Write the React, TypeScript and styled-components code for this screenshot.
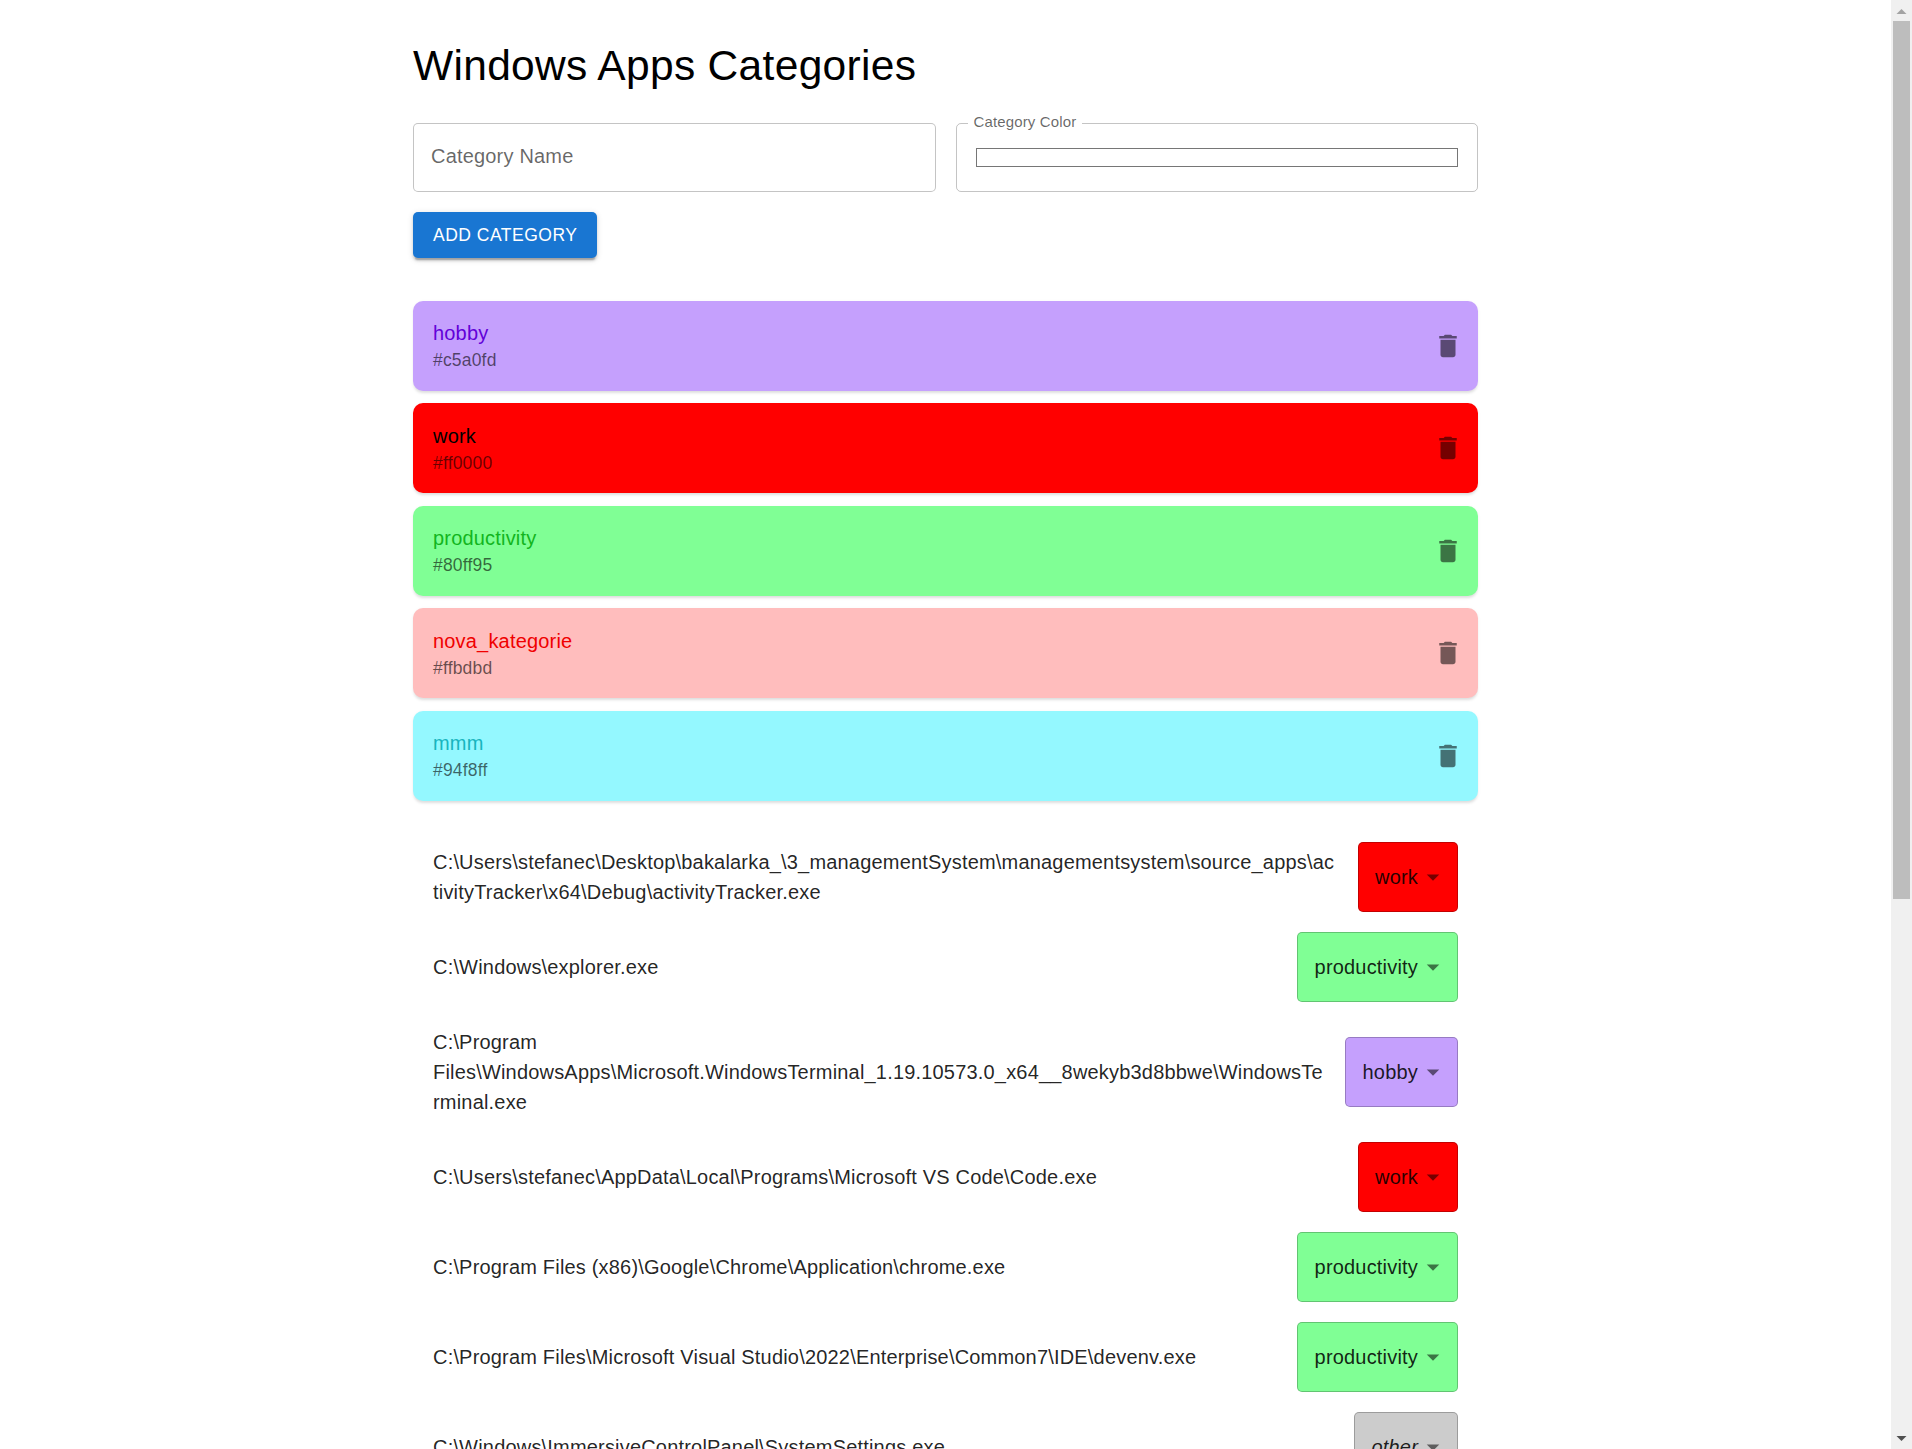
import styled, { createGlobalStyle } from 'styled-components';

const GlobalStyle = createGlobalStyle`
  body {
    margin: 0;
    background: #fff;
    font-family: "Liberation Sans", Arial, sans-serif;
    color: rgba(0, 0, 0, 0.87);
  }
`;

const Shell = styled.div`
  padding-right: 21px;
`;

const Page = styled.main`
  box-sizing: border-box;
  width: 1065px;
  margin: 0 auto;
  padding-top: 40px;
`;

const Title = styled.h1`
  margin: 0 0 30.5px;
  font-size: 42.5px;
  font-weight: 400;
  line-height: 1.235;
  letter-spacing: 0.00735em;
  color: #000;
`;

const FieldRow = styled.div`
  display: grid;
  grid-template-columns: 1fr 1fr;
  gap: 20px;
  margin-bottom: 20px;
`;

const NameInput = styled.input`
  box-sizing: border-box;
  width: 100%;
  height: 69.5px;
  padding: 0 17px 1.5px;
  border: 1.25px solid rgba(0, 0, 0, 0.23);
  border-radius: 5px;
  font: inherit;
  font-size: 20px;
  letter-spacing: 0.00938em;
  outline: none;

  &::placeholder {
    color: rgba(0, 0, 0, 0.6);
    opacity: 1;
  }
`;

const ColorField = styled.div`
  position: relative;
  box-sizing: border-box;
  height: 69.5px;
  padding: 24.5px 19.25px 0;
  border: 1.25px solid rgba(0, 0, 0, 0.23);
  border-radius: 5px;
`;

const ColorLabel = styled.label`
  position: absolute;
  top: -11.5px;
  left: 11px;
  padding: 0 6px;
  background: #fff;
  font-size: 15px;
  line-height: 20px;
  letter-spacing: 0.00938em;
  color: rgba(0, 0, 0, 0.6);
`;

const ColorInput = styled.input`
  display: block;
  box-sizing: border-box;
  width: 100%;
  height: 19px;
  padding: 0;
  border: 1.25px solid #767676;
  background: #fff;
  appearance: none;

  &::-webkit-color-swatch-wrapper {
    padding: 0;
  }
  &::-webkit-color-swatch {
    border: none;
  }
`;

const AddButton = styled.button`
  display: block;
  height: 45.5px;
  padding: 0 20px;
  border: none;
  border-radius: 5px;
  background: #1976d2;
  color: #fff;
  font: inherit;
  font-size: 17.5px;
  letter-spacing: 0.02857em;
  text-transform: uppercase;
  cursor: pointer;
  box-shadow: 0 3.75px 1.25px -2.5px rgba(0, 0, 0, 0.2), 0 2.5px 2.5px 0 rgba(0, 0, 0, 0.14),
    0 1.25px 6.25px 0 rgba(0, 0, 0, 0.12);
`;

const CategoryList = styled.div`
  display: flex;
  flex-direction: column;
  gap: 12.5px;
  margin: 43px 0 31.5px;
`;

const CategoryCard = styled.div<{ $bg: string }>`
  display: flex;
  align-items: center;
  justify-content: space-between;
  box-sizing: border-box;
  height: 90px;
  padding: 0 15px 0 20px;
  border-radius: 10px;
  background: ${(p) => p.$bg};
  box-shadow: 0 2.5px 2.5px -1.25px rgba(0, 0, 0, 0.08), 0 1.25px 3.75px 0 rgba(0, 0, 0, 0.06);
`;

const CategoryText = styled.div`
  display: flex;
  flex-direction: column;
`;

const CategoryName = styled.span<{ $color: string }>`
  font-size: 20px;
  line-height: 30px;
  letter-spacing: 0.00938em;
  color: ${(p) => p.$color};
`;

const CategoryHex = styled.span`
  font-size: 17.5px;
  line-height: 25px;
  letter-spacing: 0.01071em;
  color: rgba(0, 0, 0, 0.6);
`;

const DeleteButton = styled.button`
  display: flex;
  padding: 0;
  border: none;
  background: none;
  cursor: pointer;
  color: rgba(0, 0, 0, 0.54);
`;

const AppList = styled.div`
  display: flex;
  flex-direction: column;
`;

const AppRow = styled.div`
  display: flex;
  align-items: center;
  gap: 20px;
  padding: 10px 20px;
`;

const AppPath = styled.div`
  flex: 1 1 auto;
  min-width: 0;
  margin: 5px 0;
  font-size: 20px;
  line-height: 30px;
  letter-spacing: 0.00938em;
  overflow-wrap: anywhere;
  color: rgba(0, 0, 0, 0.87);
`;

const CategorySelect = styled.div<{ $bg: string; $italic?: boolean }>`
  position: relative;
  flex: none;
  box-sizing: border-box;
  height: 70px;
  padding: 0 39px 0 16.5px;
  border: 1.25px solid rgba(0, 0, 0, 0.23);
  border-radius: 5px;
  background: ${(p) => p.$bg};
  font-size: 20px;
  font-style: ${(p) => (p.$italic ? 'italic' : 'normal')};
  line-height: 68.5px;
  letter-spacing: 0.00938em;
  color: rgba(0, 0, 0, 0.87);
`;

const SelectArrow = styled.svg`
  position: absolute;
  top: 50%;
  right: 8.75px;
  width: 30px;
  height: 30px;
  transform: translateY(-50%);
  fill: rgba(0, 0, 0, 0.54);
`;

const Scrollbar = styled.div`
  position: fixed;
  top: 0;
  right: 0;
  bottom: 0;
  display: flex;
  flex-direction: column;
  width: 21px;
  background: #f0f0f0;
`;

const ScrollArrow = styled.svg`
  flex: none;
  width: 21px;
  height: 21px;
`;

const ScrollTrack = styled.div`
  flex: 1;
  padding: 0 2px;
`;

const ScrollThumb = styled.div`
  height: 878px;
  background: #bdbdbd;
`;

const categories = [
  { name: 'hobby', hex: '#c5a0fd', text: '#6200d8' },
  { name: 'work', hex: '#ff0000', text: '#000000' },
  { name: 'productivity', hex: '#80ff95', text: '#12b51e' },
  { name: 'nova_kategorie', hex: '#ffbdbd', text: '#f00000' },
  { name: 'mmm', hex: '#94f8ff', text: '#18b4be' },
];

const colorOf: Record<string, string> = {
  hobby: '#c5a0fd',
  work: '#ff0000',
  productivity: '#80ff95',
  other: '#cccccc',
};

const apps = [
  {
    path: 'C:\\Users\\stefanec\\Desktop\\bakalarka_\\3_managementSystem\\managementsystem\\source_apps\\activityTracker\\x64\\Debug\\activityTracker.exe',
    category: 'work',
  },
  { path: 'C:\\Windows\\explorer.exe', category: 'productivity' },
  {
    path: 'C:\\Program Files\\WindowsApps\\Microsoft.WindowsTerminal_1.19.10573.0_x64__8wekyb3d8bbwe\\WindowsTerminal.exe',
    category: 'hobby',
  },
  { path: 'C:\\Users\\stefanec\\AppData\\Local\\Programs\\Microsoft VS Code\\Code.exe', category: 'work' },
  { path: 'C:\\Program Files (x86)\\Google\\Chrome\\Application\\chrome.exe', category: 'productivity' },
  { path: 'C:\\Program Files\\Microsoft Visual Studio\\2022\\Enterprise\\Common7\\IDE\\devenv.exe', category: 'productivity' },
  { path: 'C:\\Windows\\ImmersiveControlPanel\\SystemSettings.exe', category: 'other' },
];

function App() {
  return (
    <Shell>
      <GlobalStyle />
      <Page>
        <Title>Windows Apps Categories</Title>
        <FieldRow>
          <NameInput type="text" placeholder="Category Name" />
          <ColorField>
            <ColorLabel htmlFor="category-color">Category Color</ColorLabel>
            <ColorInput id="category-color" type="color" defaultValue="#ffffff" />
          </ColorField>
        </FieldRow>
        <AddButton type="button">Add Category</AddButton>

        <CategoryList>
          {categories.map((category) => (
            <CategoryCard key={category.name} $bg={category.hex}>
              <CategoryText>
                <CategoryName $color={category.text}>{category.name}</CategoryName>
                <CategoryHex>{category.hex}</CategoryHex>
              </CategoryText>
              <DeleteButton type="button" aria-label="delete">
                <svg width="30" height="30" viewBox="0 0 24 24" fill="currentColor">
                  <path d="M6 19c0 1.1.9 2 2 2h8c1.1 0 2-.9 2-2V7H6v12zM19 4h-3.5l-1-1h-5l-1 1H5v2h14V4z" />
                </svg>
              </DeleteButton>
            </CategoryCard>
          ))}
        </CategoryList>

        <AppList>
          {apps.map((app) => (
            <AppRow key={app.path}>
              <AppPath>{app.path}</AppPath>
              <CategorySelect $bg={colorOf[app.category]} $italic={app.category === 'other'}>
                {app.category}
                <SelectArrow viewBox="0 0 24 24">
                  <path d="M7 10l5 5 5-5z" />
                </SelectArrow>
              </CategorySelect>
            </AppRow>
          ))}
        </AppList>
      </Page>
      <Scrollbar>
        <ScrollArrow viewBox="0 0 21 21">
          <path d="M10.5 9l5 5h-10z" fill="#a3a3a3" />
        </ScrollArrow>
        <ScrollTrack>
          <ScrollThumb />
        </ScrollTrack>
        <ScrollArrow viewBox="0 0 21 21">
          <path d="M10.5 13l-5-5h10z" fill="#505050" />
        </ScrollArrow>
      </Scrollbar>
    </Shell>
  );
}

export default App;
